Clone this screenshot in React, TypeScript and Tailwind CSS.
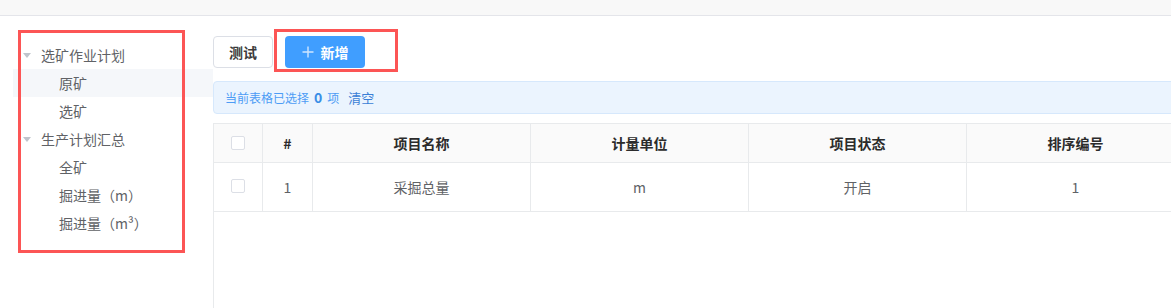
import React from "react";

const font = { fontFamily: '"Noto Sans CJK SC", "Noto Sans", sans-serif' };

function Caret() {
  return (
    <svg width="8" height="5" viewBox="0 0 8 5" className="block">
      <path d="M0 0 L8 0 L4 5 Z" fill="#c0c4cc" />
    </svg>
  );
}

function TreeRow({ label, level, active }: { label: string; level: 0 | 1; active?: boolean }) {
  return (
    <div className={`flex h-[28px] items-center ${active ? "bg-[#f5f7fa]" : ""}`}>
      {level === 0 ? (
        <>
          <div className="ml-[10px] mr-[10px] flex w-[8px] items-center">
            <Caret />
          </div>
          <span className="text-[14px] text-[#606266]">{label}</span>
        </>
      ) : (
        <span className="ml-[46px] text-[14px] text-[#606266]">{label}</span>
      )}
    </div>
  );
}

function Checkbox({ className = "" }: { className?: string }) {
  return <span className={`block h-[14px] w-[14px] rounded-[2px] border border-[#dcdfe6] bg-white ${className}`} />;
}

const cols = [
  { w: "w-[49px]", key: "cb" },
  { w: "w-[50px]", key: "#" },
  { w: "w-[218px]", key: "项目名称" },
  { w: "w-[218px]", key: "计量单位" },
  { w: "w-[218px]", key: "项目状态" },
  { w: "w-[218px]", key: "排序编号" },
];

export default function App() {
  const row = ["", "1", "采掘总量", "m", "开启", "1"];
  return (
    <div className="relative h-[308px] w-[1171px] overflow-hidden bg-white" style={font}>
      <div className="h-[16px] border-b border-[#e4e5ea] bg-[#f8f8f8]" />
      <div className="flex h-[292px]">
        {/* Sidebar */}
        <div className="w-[213px] shrink-0 pl-[13px] pt-[25px]">
          <TreeRow label="选矿作业计划" level={0} />
          <TreeRow label="原矿" level={1} active />
          <TreeRow label="选矿" level={1} />
          <TreeRow label="生产计划汇总" level={0} />
          <TreeRow label="全矿" level={1} />
          <TreeRow label="掘进量（m）" level={1} />
          <TreeRow label="掘进量（m³）" level={1} />
        </div>
        {/* Main */}
        <div className="flex min-w-0 flex-1 flex-col pt-[20px]">
          <div className="flex items-center gap-[12px]">
            <button className="flex h-[32px] w-[60px] items-center justify-center rounded-[4px] border border-[#dcdfe6] bg-white text-[14px] font-bold text-[#3a3a3a]">
              测试
            </button>
            <button className="flex h-[32px] w-[80px] items-center justify-center gap-[7px] rounded-[4px] bg-[#409eff] text-[14px] font-bold text-white">
              <svg width="12" height="12" viewBox="0 0 12 12">
                <path d="M6 0.5 V11.5 M0.5 6 H11.5" stroke="#cfe6ff" strokeWidth="1.4" />
              </svg>
              新增
            </button>
          </div>
          <div className="mt-[13px] flex h-[33px] w-[980px] items-center rounded-[4px] border border-[#d6e8fc] bg-[#ebf4fe] pl-[11px] text-[12px] text-[#4d9cf5]">
            <span>当前表格已选择</span>
            <span className="mx-[5px] text-[14px] font-bold text-[#3a8ee6]">0</span>
            <span>项</span>
            <span className="ml-[9px] text-[13px] text-[#3a7fd6]">清空</span>
          </div>
          <div className="mt-[9px] flex-1 border-l border-t border-[#e8eaec]">
            <div className="flex h-[39px] border-b border-[#e8eaec] bg-[#fafafa]">
              {cols.map((c, i) => (
                <div
                  key={c.key}
                  className={`${c.w} flex shrink-0 items-center justify-center border-r border-[#e8eaec] text-[14px] font-bold text-[#2b2b2b]`}
                >
                  {i === 0 ? <Checkbox /> : c.key}
                </div>
              ))}
            </div>
            <div className="flex h-[49px] border-b border-[#e8eaec]">
              {cols.map((c, i) => (
                <div
                  key={c.key}
                  className={`${c.w} flex shrink-0 items-center justify-center border-r border-[#e8eaec] text-[14px] text-[#606266]`}
                >
                  {i === 0 ? <Checkbox className="-mt-[3px]" /> : row[i]}
                </div>
              ))}
            </div>
          </div>
        </div>
      </div>
      {/* Annotation boxes */}
      <div className="pointer-events-none absolute left-[18px] top-[30px] h-[223px] w-[167px] border-[3px] border-[#fc5555]" />
      <div className="pointer-events-none absolute left-[274px] top-[29px] h-[43px] w-[124px] border-[3px] border-[#fc5555]" />
    </div>
  );
}
